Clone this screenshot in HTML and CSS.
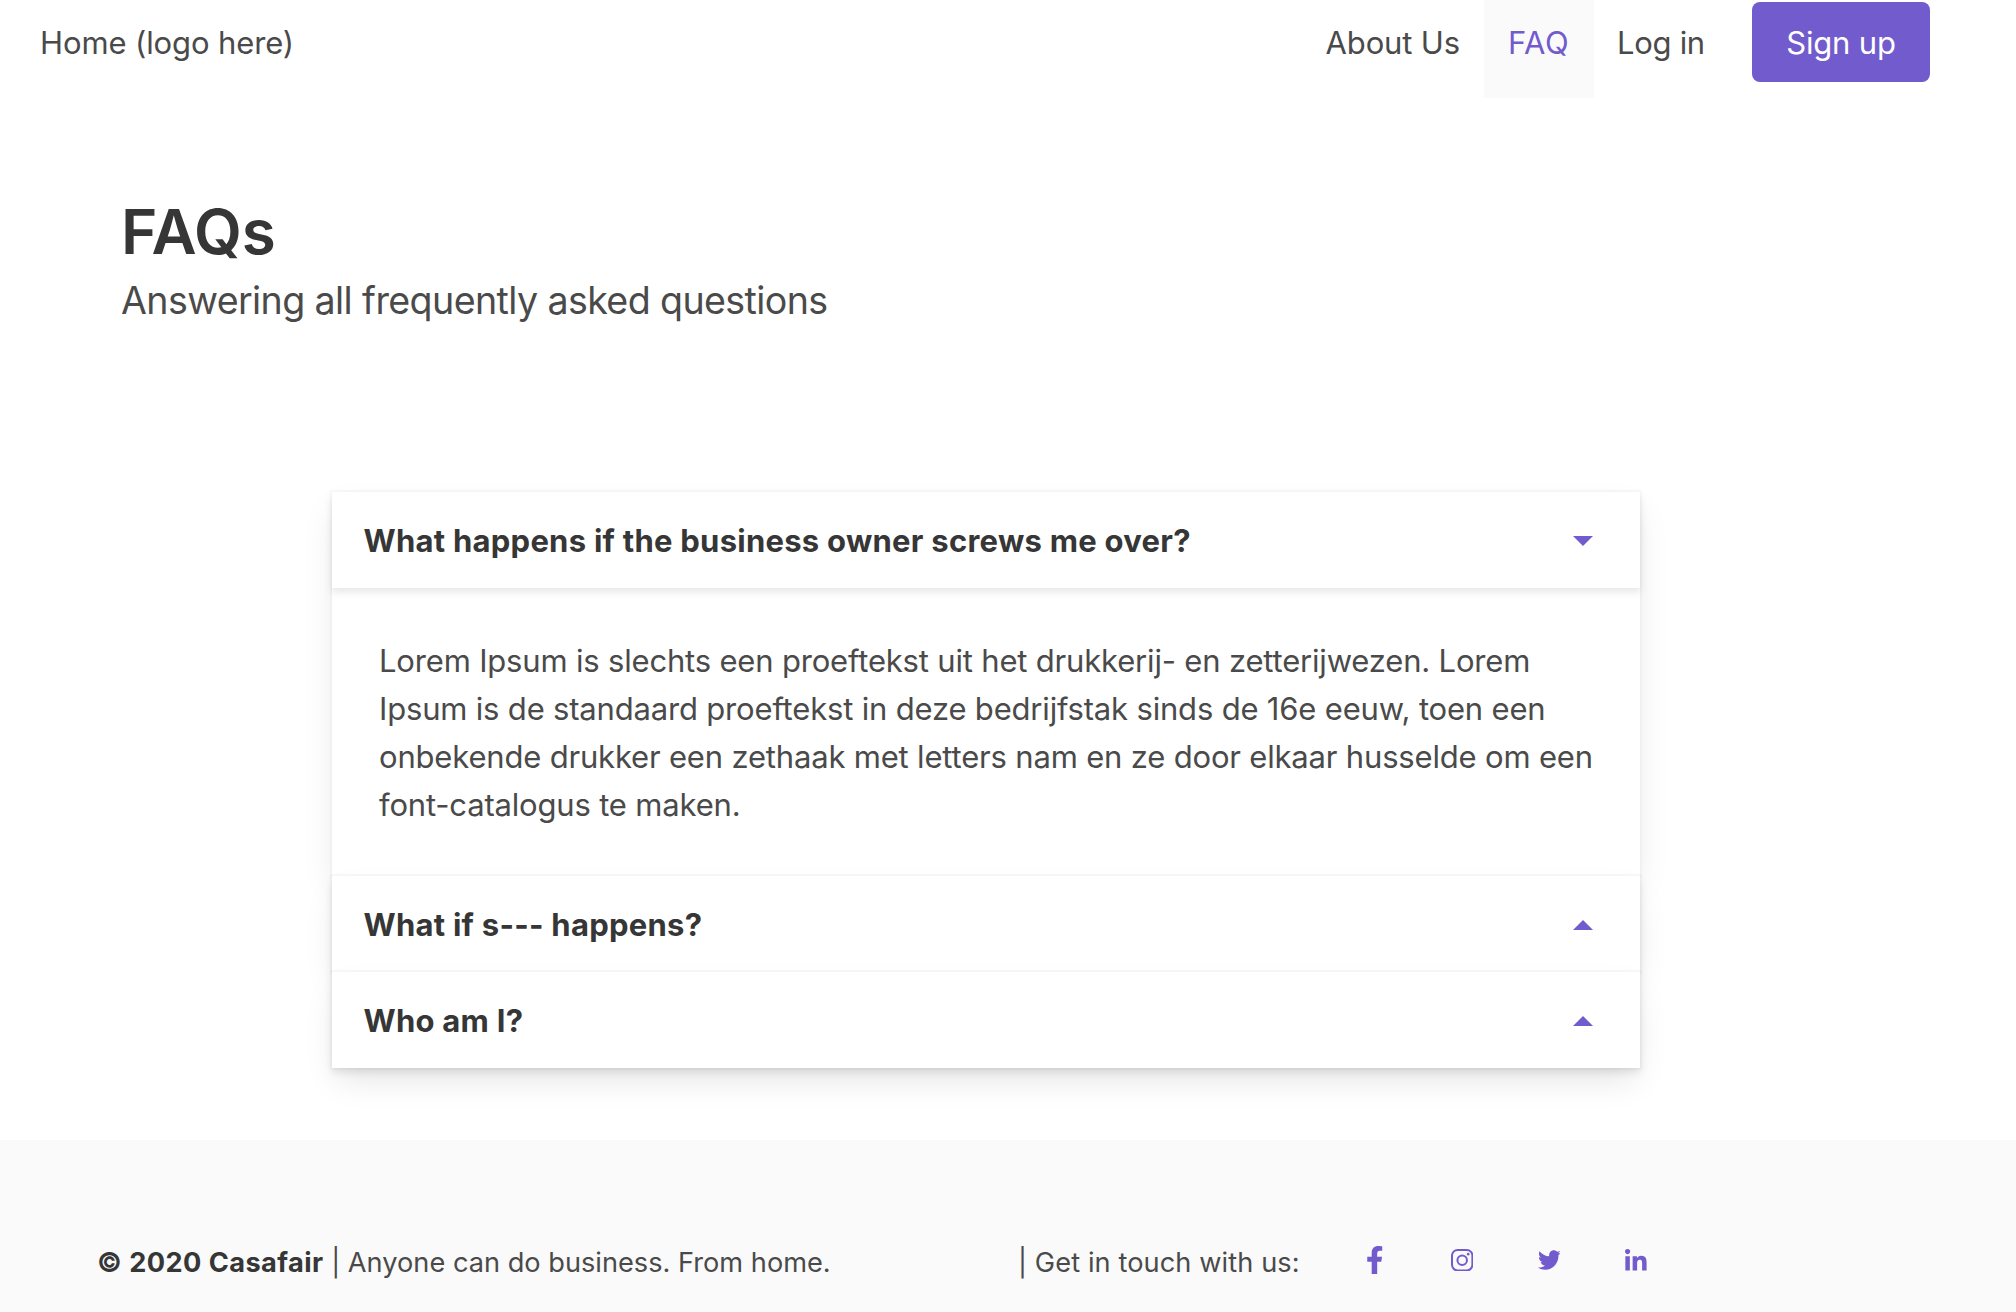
FILE: index.html
```html
<!DOCTYPE html>
<html lang="en">
<head>
<meta charset="utf-8">
<title>FAQs - Casafair</title>
<link rel="stylesheet" href="styles.css">
</head>
<body>
<nav class="navbar">
  <a class="brand">Home (logo here)</a>
  <div class="menu">
    <a class="item item-about">About Us</a>
    <a class="item item-active">FAQ</a>
    <a class="item item-login">Log in</a>
    <a class="button">Sign up</a>
  </div>
</nav>

<header class="hero">
  <h1 class="title">FAQs</h1>
  <p class="subtitle">Answering all frequently asked questions</p>
</header>

<main class="accordion">
  <section class="card">
    <div class="card-header">
      <h2 class="question">What happens if the business owner screws me over?</h2>
      <svg class="caret" viewBox="0 0 20 10"><path d="M0 0h20L10 10z"/></svg>
    </div>
    <p class="card-content">Lorem Ipsum is slechts een proeftekst uit het drukkerij- en zetterijwezen. Lorem Ipsum is de standaard proeftekst in deze bedrijfstak sinds de 16e eeuw, toen een onbekende drukker een zethaak met letters nam en ze door elkaar husselde om een font-catalogus te maken.</p>
  </section>
  <section class="card">
    <div class="card-header">
      <h2 class="question">What if s--- happens?</h2>
      <svg class="caret" viewBox="0 0 20 10"><path d="M0 10h20L10 0z"/></svg>
    </div>
  </section>
  <section class="card">
    <div class="card-header">
      <h2 class="question">Who am I?</h2>
      <svg class="caret" viewBox="0 0 20 10"><path d="M0 10h20L10 0z"/></svg>
    </div>
  </section>
</main>

<footer class="footer">
  <p class="copyright"><strong class="owner">© 2020 Casafair</strong> | Anyone can do business. From home.</p>
  <p class="contact">| Get in touch with us:</p>
  <div class="social">
    <a class="social-link"><svg class="icon-facebook" viewBox="0 0 320 512"><path d="M279.14 288l14.22-92.66h-88.91v-60.13c0-25.35 12.42-50.06 52.24-50.06h40.42V6.26S260.43 0 225.36 0c-73.22 0-121.08 44.38-121.08 124.72v70.62H22.89V288h81.39v224h100.17V288z"/></svg></a>
    <a class="social-link"><svg class="icon-instagram" viewBox="0 0 448 448"><rect x="20" y="20" width="408" height="408" rx="112"/><circle cx="224" cy="224" r="95"/><circle class="dot" cx="343.7" cy="104.3" r="26.8"/></svg></a>
    <a class="social-link"><svg class="icon-twitter" viewBox="0 0 512 512" preserveAspectRatio="none"><path d="M459.37 151.716c.325 4.548.325 9.097.325 13.645 0 138.72-105.583 298.558-298.558 298.558-59.452 0-114.68-17.219-161.137-47.106 8.447.974 16.568 1.299 25.34 1.299 49.055 0 94.213-16.568 130.274-44.832-46.132-.975-84.792-31.188-98.112-72.772 6.498.974 12.995 1.624 19.818 1.624 9.421 0 18.843-1.3 27.614-3.573-48.081-9.747-84.143-51.98-84.143-102.985v-1.299c13.969 7.797 30.214 12.67 47.431 13.319-28.264-18.843-46.781-51.005-46.781-87.391 0-19.492 5.197-37.36 14.294-52.954 51.655 63.675 129.3 105.258 216.365 109.807-1.624-7.797-2.599-15.918-2.599-24.04 0-57.828 46.782-104.934 104.934-104.934 30.213 0 57.502 12.67 76.67 33.137 23.715-4.548 46.456-13.32 66.599-25.34-7.798 24.366-24.366 44.833-46.132 57.827 21.117-2.273 41.584-8.122 60.426-16.243-14.292 20.791-32.161 39.308-52.628 54.253z"/></svg></a>
    <a class="social-link"><svg class="icon-linkedin" viewBox="0 0 448 448"><path d="M100.28 448H7.4V148.9h92.88zM53.79 108.1C24.09 108.1 0 83.5 0 53.8a53.79 53.79 0 0 1 107.58 0c0 29.7-24.1 54.3-53.79 54.3zM447.9 448h-92.68V302.4c0-34.7-.7-79.2-48.29-79.2-48.29 0-55.69 37.7-55.69 76.7V448h-92.78V148.9h89.08v40.8h1.3c12.4-23.5 42.69-48.3 87.88-48.3 94 0 111.28 61.9 111.28 142.3V448z"/></svg></a>
  </div>
</footer>
</body>
</html>
```
FILE: styles.css
```css
* {
  box-sizing: border-box;
}

body {
  margin: 0;
  height: 1312px;
  display: flex;
  flex-direction: column;
  overflow: hidden;
  background: #fff;
  color: #4a4a4a;
  font: 400 31px/48px Inter, "Liberation Sans", sans-serif;
}

h1,
h2,
p {
  margin: 0;
}

/* Navigation */
.navbar {
  display: flex;
  justify-content: space-between;
  height: 98px;
  padding: 0 86px 0 40px;
}

.brand {
  padding-top: 19px;
  letter-spacing: -0.12px;
}

.menu {
  display: flex;
  align-items: flex-start;
}

.item {
  height: 98px;
  padding: 19px 24px 0;
  white-space: nowrap;
}

.item-about {
  letter-spacing: -0.15px;
}

.item-active {
  width: 110px;
  background: #fafafa;
  color: #725bcc;
  letter-spacing: 0.6px;
}

.item-login {
  width: 158px;
  padding-left: 23px;
  letter-spacing: -0.3px;
}

.button {
  width: 178px;
  height: 80px;
  margin-top: 2px;
  padding-top: 17px;
  border-radius: 8px;
  background: #725bcc;
  color: #fff;
  text-align: center;
  letter-spacing: -0.2px;
}

/* Page heading */
.hero {
  height: 394px;
  padding: 96px 0 0 121px;
}

.title {
  font-size: 62px;
  font-weight: 600;
  line-height: 76px;
  letter-spacing: -0.2px;
  color: #363636;
}

.subtitle {
  padding-top: 1px;
  font-size: 37.6px;
  line-height: 60px;
  letter-spacing: -0.6px;
}

/* Accordion */
.accordion {
  width: 1308px;
  height: 648px;
  margin-left: 332px;
}

.card {
  position: relative;
  background: #fff;
  box-shadow: 0 16px 32px -4px rgba(10, 10, 10, 0.1), 0 0 0 2px rgba(10, 10, 10, 0.02);
}

.card-header {
  display: flex;
  justify-content: space-between;
  height: 96px;
  padding: 25px 47px 23px 31.5px;
  box-shadow: 0 4px 8px rgba(10, 10, 10, 0.1);
}

.question {
  font-size: 31px;
  font-weight: 700;
  line-height: 48px;
  letter-spacing: 0.26px;
  color: #363636;
}

.caret {
  width: 20px;
  height: 10px;
  margin-top: 19px;
  fill: #725bcc;
}

.card-content {
  padding: 49px 42px 47px 47px;
  letter-spacing: -0.18px;
}

/* Footer */
.footer {
  display: flex;
  height: 172px;
  padding: 101px 0 0 97px;
  background: #fafafa;
  font-size: 27.2px;
  line-height: 42px;
}

.copyright {
  width: 921px;
  padding-top: 1px;
}

.owner {
  color: #363636;
  font-weight: 700;
  letter-spacing: 0.43px;
}

.contact {
  width: 313px;
  padding-top: 1px;
  letter-spacing: 0.09px;
}

.social {
  display: grid;
  grid-template-columns: repeat(4, 87.2px);
  height: 38px;
  fill: #725bcc;
}

.social-link {
  display: flex;
  align-items: center;
  justify-content: center;
}

.icon-facebook {
  width: 17.5px;
  height: 28px;
}

.icon-instagram {
  width: 22.4px;
  height: 22.4px;
  fill: none;
  stroke: #725bcc;
  stroke-width: 40;
}

.dot {
  fill: #725bcc;
  stroke: none;
}

.icon-twitter {
  width: 22.8px;
  height: 24px;
}

.icon-linkedin {
  width: 21.6px;
  height: 21.6px;
}
```
